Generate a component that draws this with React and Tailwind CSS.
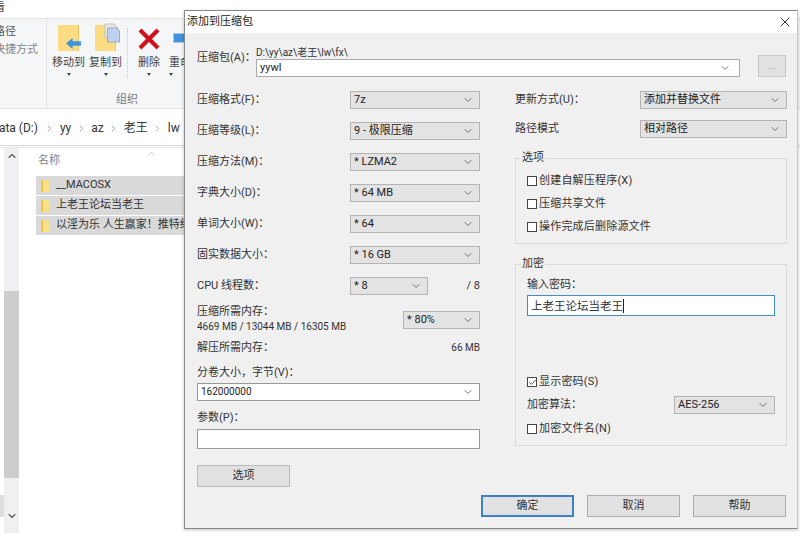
import { ChevronDown, ChevronUp, ChevronRight, X, Check } from "lucide-react";

const font = { fontFamily: 'Roboto, "Noto Sans CJK SC", sans-serif' };

function Arrow() {
  return <ChevronDown size={12} strokeWidth={1.6} className="text-[#555] shrink-0" />;
}

function Select({ value, className = "w-[130px]", white }) {
  return (
    <div className={`${className} h-[18px] flex items-center justify-between border border-[#b4b4b4] pl-[3px] pr-[5px] text-[#222] ${white ? "bg-white" : "bg-[#e3e3e3]"}`}>
      <span>{value}</span>
      <Arrow />
    </div>
  );
}

function Row({ label, value }) {
  return (
    <div className="flex items-center justify-between h-[18px]">
      <span>{label}</span>
      <Select value={value} />
    </div>
  );
}

function CheckRow({ label, checked, className = "" }) {
  return (
    <div className={`flex items-center gap-[2px] h-[14px] ${className}`}>
      <span className="w-[10px] h-[10px] border border-[#444] bg-white flex items-center justify-center">
        {checked && <Check size={9} strokeWidth={2.4} className="text-[#444] shrink-0" />}
      </span>
      <span className="tracking-[0.2px]">{label}</span>
    </div>
  );
}

function Btn({ label, active, className = "" }) {
  return (
    <div className={`h-[22px] w-[93px] flex items-center justify-center bg-[#e1e1e1] border ${active ? "border-[#3b82c4] border-2" : "border-[#adadad]"} ${className}`}>
      {label}
    </div>
  );
}

function Folder({ children }) {
  return (
    <div className="relative w-[21px] h-[26px] bg-[#fbdc82] border-r border-[#e8c25c]">{children}</div>
  );
}

function SmallFolder() {
  return <div className="w-[8px] h-[12px] shrink-0 rounded-[1px] bg-[#fbe08a] border-l-2 border-[#f5c33f]" />;
}

function RibbonTool({ label, children, className = "" }) {
  return (
    <div className={`flex flex-col items-center ${className}`}>
      <div className="h-[29px] flex items-end">{children}</div>
      <div className="mt-[4px] text-[#444] whitespace-nowrap leading-[16px]">{label}</div>
      <div className="w-0 h-0 mt-[2px] border-x-[2.5px] border-x-transparent border-t-[3px] border-t-[#444]" />
    </div>
  );
}

function Explorer() {
  return (
    <div className="w-full h-full flex flex-col bg-white text-[11px] text-[#444]">
      <div className="h-[18px] overflow-hidden leading-[16px]">
        <span className="-ml-[6px] inline-block">看</span>
      </div>
      <div className="h-[91px] bg-[#f5f6f7] border-y border-[#e3e3e3] flex overflow-hidden">
        <div className="w-[53px] shrink-0 border-r border-[#e2e3e4] -ml-[6px] pt-[4px]">
          <div className="leading-[16px] mt-[1px] whitespace-nowrap text-[#555]">路径</div>
          <div className="leading-[16px] mt-[2px] whitespace-nowrap text-[#888]">快捷方式</div>
        </div>
        <div className="w-[140px] shrink-0 flex flex-col">
          <div className="flex gap-[4px] pl-[5px] pt-[3px]">
            <RibbonTool label="移动到">
              <Folder>
                <svg viewBox="0 0 16 14" className="absolute w-[15px] h-[13px] left-[8px] top-[12px]">
                  <path d="M0 7 L7 1 V4.5 H16 V9.5 H7 V13 Z" fill="#3d93dd" />
                </svg>
              </Folder>
            </RibbonTool>
            <RibbonTool label="复制到">
              <Folder>
                <svg viewBox="0 0 16 20" className="absolute w-[16px] h-[20px] left-[9px] -top-[2px]">
                  <path d="M1 1H10L14 5V15H1Z" fill="#e8e8e8" stroke="#c0c0c0" />
                  <path d="M3.5 5H12L15.5 8V19H3.5Z" fill="#bcd2f0" stroke="#a9a9b5" />
                </svg>
              </Folder>
            </RibbonTool>
            <div className="w-px h-[50px] mt-[6px] ml-[1px] mr-[5px] border-l border-dotted border-[#c8c8c8]" />
            <RibbonTool label="删除">
              <svg viewBox="0 0 24 24" className="w-[24px] h-[24px]">
                <path d="M3 3L21 21M21 3L3 21" stroke="#d0101b" strokeWidth="4.2" />
              </svg>
            </RibbonTool>
            <RibbonTool label="重命名" className="items-start ml-[4px]">
              <div className="w-[24px] h-[10px] mb-[8px] ml-[4px] bg-[#3d93dd] border border-[#b8c8d8]" />
            </RibbonTool>
          </div>
          <div className="mt-auto pl-[69px] text-[#777] leading-[16px]">组织</div>
        </div>
      </div>
      <div className="h-[4px] bg-white" />
      <div className="h-[33px] flex items-center gap-[5.5px] -ml-[9px] pb-[2px] text-[12px] text-[#333] border-b border-[#d8d8d8] shrink-0 bg-white">
        <span className="whitespace-nowrap">Data (D:)</span>
        <ChevronRight size={9} className="text-[#888] ml-[2px]" />
        <span>yy</span>
        <ChevronRight size={9} className="text-[#888]" />
        <span>az</span>
        <ChevronRight size={9} className="text-[#888]" />
        <span className="whitespace-nowrap">老王</span>
        <ChevronRight size={9} className="text-[#888]" />
        <span>lw</span>
      </div>
      <div className="flex-1 flex min-h-0 border-t border-[#e5e5e5] mt-px">
        <div className="w-[4px] flex flex-col shrink-0">
          <div className="mt-auto mb-[16px] h-[22px] bg-[#dedede]" />
        </div>
        <div className="w-[15px] flex flex-col items-center bg-[#f0f0f2] shrink-0">
          <ChevronUp size={12} strokeWidth={2.2} className="text-[#555] mt-[2px] shrink-0" />
          <div className="mt-[129px] w-full flex-1 bg-[#cdcdcd]" />
          <div className="w-full h-[45px] mb-[10px] flex items-end justify-center pb-[1px]">
            <ChevronDown size={12} strokeWidth={2.2} className="text-[#555]" />
          </div>
        </div>
        <div className="relative pl-[17px] flex-1 min-w-0">
          <ChevronUp size={11} strokeWidth={1.2} className="absolute left-[127px] top-0 text-[#999]" />
          <div className="h-[27px] pl-[2px] pt-[5px] text-[#7a8590] leading-[16px]">名称</div>
          <div className="flex flex-col w-[148px] text-[#333] mt-px">
            {["__MACOSX", "上老王论坛当老王", "以淫为乐 人生赢家！推特红人合集"].map((t) => (
              <div key={t} className="h-[19px] mb-px bg-[#d9d9d9] flex items-center gap-[7px] pl-[5px] overflow-hidden whitespace-nowrap">
                <SmallFolder />
                <span>{t}</span>
              </div>
            ))}
          </div>
        </div>
      </div>
    </div>
  );
}

function Dialog() {
  return (
    <div className="absolute left-[184px] top-[10px] w-[614px] h-[519px] flex flex-col bg-[#f0f0f0] border border-[#8a8a8a] border-r-[#c8c8c8] shadow-[0_1px_3px_rgba(0,0,0,0.25)] text-[11px] text-[#333] leading-[16px]">
      <div className="h-[22px] bg-white flex items-center justify-between pl-[2px] pr-[4px] shrink-0">
        <span className="text-[#222]">添加到压缩包</span>
        <X size={16} strokeWidth={1.4} className="text-[#222]" />
      </div>
      <div className="flex-1 flex flex-col pl-[12px] pr-[10px]">
        <div className="flex mt-[12px] h-[36px]">
          <span className="w-[59px] mt-[5px] shrink-0">压缩包(A)：</span>
          <div className="flex-1 flex flex-col">
            <span className="leading-[14px] mt-px -mb-px text-[10px] text-[#333]">D:\yy\az\老王\lw\fx\</span>
            <div className="flex items-center">
              <div className="w-[484px] h-[18px] bg-white border border-[#aaa] flex items-center justify-between pl-[3px] pr-[8px]">
                <span className="text-[#222]">yywl</span>
                <Arrow />
              </div>
              <div className="ml-[18px] w-[28px] h-[22px] -mt-[4px] bg-[#e1e1e1] border border-[#c8c8c8] flex items-center justify-center text-[9px] text-[#888]">...</div>
            </div>
          </div>
        </div>
        <div className="flex mt-[10px] gap-[35px]">
          <div className="w-[283px] flex flex-col">
            <div className="flex flex-col gap-[13px]">
              <Row label="压缩格式(F)：" value="7z" />
              <Row label="压缩等级(L)：" value="9 - 极限压缩" />
              <Row label="压缩方法(M)：" value="* LZMA2" />
              <Row label="字典大小(D)：" value="* 64 MB" />
              <Row label="单词大小(W)：" value="* 64" />
              <Row label="固实数据大小：" value="* 16 GB" />
              <div className="flex items-center h-[18px]">
                <span className="w-[153px]">CPU 线程数：</span>
                <Select value="* 8" className="w-[78px]" />
                <span className="ml-auto">/ 8</span>
              </div>
            </div>
            <div className="flex items-center justify-between mt-[7px] h-[33px]">
              <div className="flex flex-col">
                <span>压缩所需内存：</span>
                <span className="text-[10px] leading-[14px]">4669 MB / 13044 MB / 16305 MB</span>
              </div>
              <Select value="* 80%" className="w-[77px] mt-[2px]" />
            </div>
            <div className="flex justify-between mt-[5px]">
              <span>解压所需内存：</span>
              <span className="text-[10px]">66 MB</span>
            </div>
            <span className="mt-[9px]">分卷大小，字节(V)：</span>
            <div className="mt-[2px] h-[18px] bg-white border border-[#999] flex items-center justify-between pl-[3px] pr-[5px]">
              <span className="text-[10px] text-[#222]">162000000</span>
              <Arrow />
            </div>
            <span className="mt-[9px]">参数(P)：</span>
            <div className="mt-[3px] h-[20px] bg-white border border-[#999]" />
            <div className="mt-[16px] w-[93px] h-[22px] bg-[#e1e1e1] border border-[#bbb] flex items-center justify-center">选项</div>
          </div>
          <div className="w-[272px] flex flex-col">
            <div className="flex items-center justify-between h-[18px]">
              <span>更新方式(U)：</span>
              <Select value="添加并替换文件" className="w-[147px]" />
            </div>
            <div className="flex items-center justify-between h-[18px] mt-[11px]">
              <span>路径模式</span>
              <Select value="相对路径" className="w-[147px]" />
            </div>
            <div className="relative mt-[20px] h-[86px] border border-[#dcdcdc] pt-[15px] pl-[11px] flex flex-col gap-[9px]">
              <span className="absolute -top-[9px] left-[5px] px-[1px] bg-[#f0f0f0]">选项</span>
              <CheckRow label="创建自解压程序(X)" />
              <CheckRow label="压缩共享文件" />
              <CheckRow label="操作完成后删除源文件" />
            </div>
            <div className="relative mt-[20px] h-[182px] border border-[#dcdcdc] pl-[11px] pr-[11px] flex flex-col">
              <span className="absolute -top-[9px] left-[5px] px-[1px] bg-[#f0f0f0]">加密</span>
              <span className="mt-[12px]">输入密码：</span>
              <div className="mt-[2px] h-[21px] bg-white border border-[#3f8fc9] flex items-center pl-[3px] text-[#333]">
                <span className="text-[11.5px]">上老王论坛当老王</span>
                <span className="w-px h-[14px] bg-[#222]" />
              </div>
              <CheckRow label="显示密码(S)" checked className="mt-[59px]" />
              <div className="flex items-center justify-between mt-[7px] h-[18px]">
                <span>加密算法：</span>
                <Select value="AES-256" className="w-[101px]" />
              </div>
              <CheckRow label="加密文件名(N)" className="mt-[8px]" />
            </div>
          </div>
        </div>
        <div className="flex justify-end gap-[13px] pr-[1px] mt-[8px]">
          <Btn label="确定" active />
          <Btn label="取消" />
          <Btn label="帮助" />
        </div>
      </div>
    </div>
  );
}

export default function App() {
  return (
    <div className="relative w-[800px] h-[533px] overflow-hidden" style={font}>
      <Explorer />
      <Dialog />
    </div>
  );
}
